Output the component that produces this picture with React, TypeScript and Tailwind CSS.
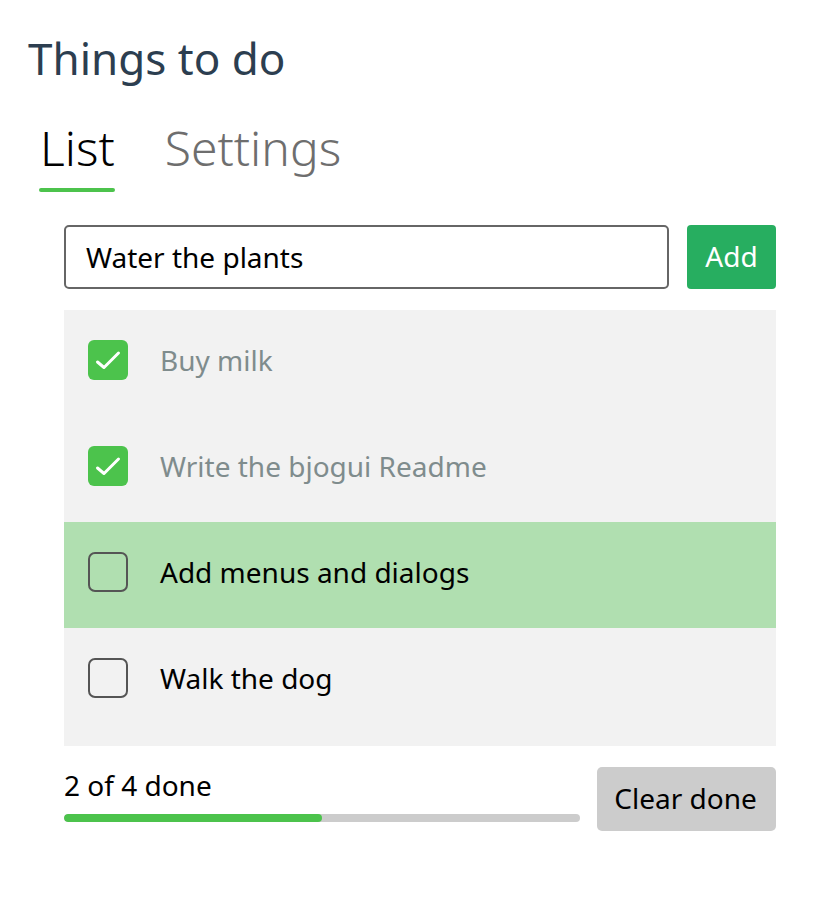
import React from "react";

type Item = { text: string; done: boolean; highlight?: boolean };

const items: Item[] = [
  { text: "Buy milk", done: true },
  { text: "Write the bjogui Readme", done: true },
  { text: "Add menus and dialogs", done: false, highlight: true },
  { text: "Walk the dog", done: false },
];

function Check({ done }: { done: boolean }) {
  if (done) {
    return (
      <div className="w-[40px] h-[40px] rounded-[6px] bg-[#4cc34c] shrink-0">
        <svg width="40" height="40" viewBox="0 0 40 40">
          <path
            d="M9.5 22 L16 27.5 L30.5 13"
            fill="none"
            stroke="white"
            strokeWidth="3"
            strokeLinecap="round"
            strokeLinejoin="round"
          />
        </svg>
      </div>
    );
  }
  return (
    <div className="w-[40px] h-[40px] rounded-[7px] border-2 border-[#555555] shrink-0" />
  );
}

export default function App() {
  return (
    <div className="font-['Noto_Sans',sans-serif] bg-white w-[840px] h-[900px]">
      <h1 className="pt-[28px] pl-[28px] text-[44px] leading-[60px] text-[#2c3e50] font-normal">
        Things to do
      </h1>
      <div className="mt-[28px] ml-[36px] flex gap-[46px]">
        <div className="flex flex-col items-center">
          <div className="text-[48px] leading-[64px] font-light text-black px-[4px]">List</div>
          <div className="mt-[8px] h-[4px] w-[76px] rounded-full bg-[#4cc34c]" />
        </div>
        <div className="text-[48px] leading-[64px] font-light text-[#6e6e6e]">Settings</div>
      </div>
      <div className="ml-[64px] w-[712px] mt-[33px]">
        <div className="flex gap-[18px] h-[64px]">
          <div className="flex-1 border-2 border-[#666666] rounded-[5px] flex items-center pl-[20px] text-[28px] text-black">
            Water the plants
          </div>
          <button className="w-[89px] rounded-[4px] bg-[#27ae60] text-white text-[28px] flex items-center justify-center pb-[2px]">
            Add
          </button>
        </div>
        <div className="mt-[21px] bg-[#f2f2f2] pb-[12px]">
          {items.map((it) => (
            <div
              key={it.text}
              className={
                "h-[106px] flex items-start pt-[30px] pl-[24px] gap-[32px] " +
                (it.highlight ? "bg-[#b0dfb0]" : "")
              }
            >
              <Check done={it.done} />
              <div
                className={
                  "text-[28px] leading-[40px] " +
                  (it.done ? "text-[#7f8c8d]" : "text-black")
                }
              >
                {it.text}
              </div>
            </div>
          ))}
        </div>
        <div className="mt-[19px] flex items-start gap-[17px]">
          <div className="w-[516px] flex flex-col">
            <div className="text-[28px] leading-[40px] text-black">2 of 4 done</div>
            <div className="mt-[9px] h-[8px] rounded-full bg-[#cccccc] overflow-hidden">
              <div className="h-full w-1/2 rounded-full bg-[#4cc34c]" />
            </div>
          </div>
          <button className="mt-[2px] w-[179px] h-[64px] rounded-[5px] bg-[#cccccc] text-[28px] text-black flex items-center justify-center pb-[3px] pr-[2px]">
            Clear done
          </button>
        </div>
      </div>
    </div>
  );
}
